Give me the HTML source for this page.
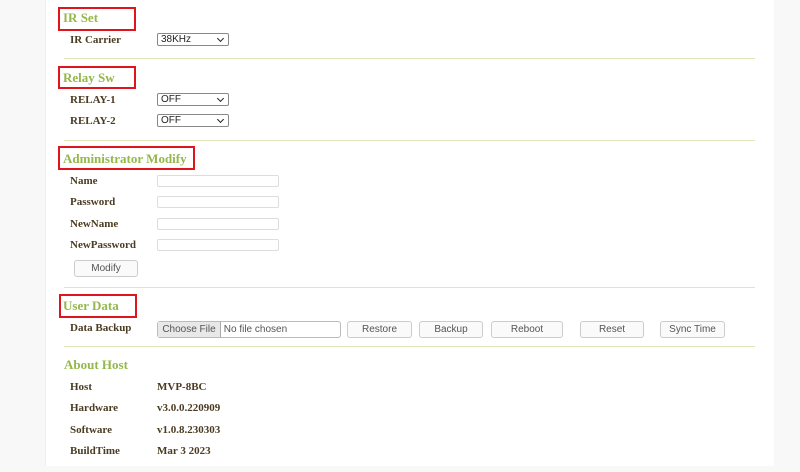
<!DOCTYPE html>
<html><head><meta charset="utf-8"><style>
body{margin:0;width:800px;height:472px;background:#f8f8f8;position:relative;overflow:hidden;font-family:"Liberation Serif",serif}
.pg{position:absolute;left:45px;top:0;width:728px;height:466px;background:#fff;border-left:1px solid #eee}
.a{position:absolute;white-space:nowrap}
.h{color:#94b84a;font-weight:bold;font-size:13px;line-height:16px}
.box{position:absolute;border:2px solid #e0141c;box-sizing:border-box}
.l{color:#4a3c22;font-weight:bold;font-size:11px;line-height:14px}
.hr{position:absolute;left:64px;width:691px;height:1px;background:#dfe6b8}
.sel{position:absolute;width:72px;height:13px;border:1px solid #888;border-radius:2px;box-sizing:border-box;font:10px "Liberation Sans",sans-serif;line-height:12px;padding-left:3px;color:#222}
.sel:after{content:"";position:absolute;right:5px;top:2px;width:4px;height:4px;border-right:1.5px solid #222;border-bottom:1.5px solid #222;transform:rotate(45deg)}
.in{position:absolute;left:157px;width:122px;height:12px;border:1px solid #ddd;border-radius:2px;box-sizing:border-box}
.b{position:absolute;height:17px;border:1px solid #ccc;border-radius:3px;box-sizing:border-box;background:#fafafa;font:10px "Liberation Sans",sans-serif;color:#555;text-align:center;line-height:15px}
</style></head><body>
<div class="pg"></div>
<div class="box" style="left:58px;top:7px;width:78px;height:24px"></div>
<div class="a h" style="left:63px;top:10px">IR Set</div>
<div class="a l" style="left:70px;top:33px">IR Carrier</div>
<div class="sel" style="left:157px;top:33px">38KHz</div>
<div class="hr" style="top:58px"></div>
<div class="box" style="left:58px;top:66px;width:78px;height:23px"></div>
<div class="a h" style="left:63px;top:70px">Relay Sw</div>
<div class="a l" style="left:70px;top:93px">RELAY-1</div>
<div class="sel" style="left:157px;top:93px">OFF</div>
<div class="a l" style="left:70px;top:114px">RELAY-2</div>
<div class="sel" style="left:157px;top:114px">OFF</div>
<div class="hr" style="top:140px"></div>
<div class="box" style="left:58px;top:146px;width:137px;height:24px"></div>
<div class="a h" style="left:63px;top:151px">Administrator Modify</div>
<div class="a l" style="left:70px;top:174px">Name</div><div class="in" style="top:175px"></div>
<div class="a l" style="left:70px;top:195px">Password</div><div class="in" style="top:196px"></div>
<div class="a l" style="left:70px;top:217px">NewName</div><div class="in" style="top:218px"></div>
<div class="a l" style="left:70px;top:238px">NewPassword</div><div class="in" style="top:239px"></div>
<div class="b" style="left:74px;top:260px;width:64px">Modify</div>
<div class="hr" style="top:287px"></div>
<div class="box" style="left:59px;top:294px;width:78px;height:24px"></div>
<div class="a h" style="left:63px;top:298px">User Data</div>
<div class="a l" style="left:70px;top:321px">Data Backup</div>
<div class="b" style="left:157px;top:321px;width:184px;background:#fff;text-align:left;border-color:#bbb"><span style="display:inline-block;width:62px;background:#e8e8e8;border-right:1px solid #aaa;text-align:center">Choose File</span> No file chosen</div>
<div class="b" style="left:347px;top:321px;width:65px">Restore</div>
<div class="b" style="left:419px;top:321px;width:64px">Backup</div>
<div class="b" style="left:491px;top:321px;width:72px">Reboot</div>
<div class="b" style="left:580px;top:321px;width:64px">Reset</div>
<div class="b" style="left:660px;top:321px;width:65px">Sync Time</div>
<div class="hr" style="top:346px"></div>
<div class="a h" style="left:64px;top:357px">About Host</div>
<div class="a l" style="left:70px;top:380px">Host</div><div class="a l" style="left:157px;top:380px">MVP-8BC</div>
<div class="a l" style="left:70px;top:401px">Hardware</div><div class="a l" style="left:157px;top:401px">v3.0.0.220909</div>
<div class="a l" style="left:70px;top:423px">Software</div><div class="a l" style="left:157px;top:423px">v1.0.8.230303</div>
<div class="a l" style="left:70px;top:444px">BuildTime</div><div class="a l" style="left:157px;top:444px">Mar 3 2023</div>
</body></html>
